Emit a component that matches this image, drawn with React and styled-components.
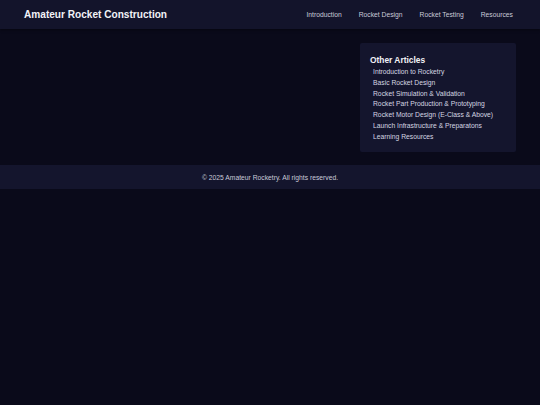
import React from 'react';
import styled, { createGlobalStyle } from 'styled-components';

const GlobalStyle = createGlobalStyle`
  html, body {
    margin: 0;
    padding: 0;
    background-color: #0a0a1a;
    font-family: "Liberation Sans", Arial, sans-serif;
    -webkit-font-smoothing: antialiased;
  }
  body {
    min-height: 405px;
  }
`;

const Header = styled.header`
  display: flex;
  flex-direction: row;
  align-items: center;
  justify-content: space-between;
  height: 29px;
  padding: 0 24px;
  background-color: #13142b;
  box-shadow: 0 1px 3px rgba(0, 0, 0, 0.4);
`;

const SiteTitle = styled.h1`
  margin: 0;
  font-size: 10.1px;
  font-weight: bold;
  color: #f2f2f7;
`;

const Nav = styled.nav`
  display: flex;
  flex-direction: row;
  gap: 17px;
  padding-right: 3px;
`;

const NavLink = styled.a`
  font-size: 6.75px;
  color: #c9cad8;
  text-decoration: none;
`;

const Main = styled.main`
  display: grid;
  grid-template-columns: 1fr 156px;
  gap: 14px;
  padding: 14px 24px 13px;
`;

const Content = styled.div``;

const Sidebar = styled.aside`
  background-color: #14152d;
  padding: 12px 10px 10px;
  border-radius: 2px;
`;

const SidebarTitle = styled.h3`
  margin: 0 0 2px;
  font-size: 8.4px;
  font-weight: bold;
  color: #f2f2f7;
`;

const ArticleList = styled.ul`
  list-style: none;
  margin: 0;
  padding: 0 0 0 3px;
`;

const ArticleItem = styled.li`
  font-size: 6.75px;
  line-height: 10.75px;
  color: #d4d5e2;
`;

const Footer = styled.footer`
  display: flex;
  align-items: center;
  justify-content: center;
  height: 24px;
  background-color: #14152d;
  font-size: 6.75px;
  color: #c9cad8;
`;

const navItems = ['Introduction', 'Rocket Design', 'Rocket Testing', 'Resources'];

const articles = [
  'Introduction to Rocketry',
  'Basic Rocket Design',
  'Rocket Simulation & Validation',
  'Rocket Part Production & Prototyping',
  'Rocket Motor Design (E-Class & Above)',
  'Launch Infrastructure & Preparatons',
  'Learning Resources',
];

export default function App() {
  return (
    <>
      <GlobalStyle />
      <Header>
        <SiteTitle>Amateur Rocket Construction</SiteTitle>
        <Nav>
          {navItems.map((item) => (
            <NavLink key={item} href="#">{item}</NavLink>
          ))}
        </Nav>
      </Header>
      <Main>
        <Content />
        <Sidebar>
          <SidebarTitle>Other Articles</SidebarTitle>
          <ArticleList>
            {articles.map((a) => (
              <ArticleItem key={a}>{a}</ArticleItem>
            ))}
          </ArticleList>
        </Sidebar>
      </Main>
      <Footer>© 2025 Amateur Rocketry. All rights reserved.</Footer>
    </>
  );
}
